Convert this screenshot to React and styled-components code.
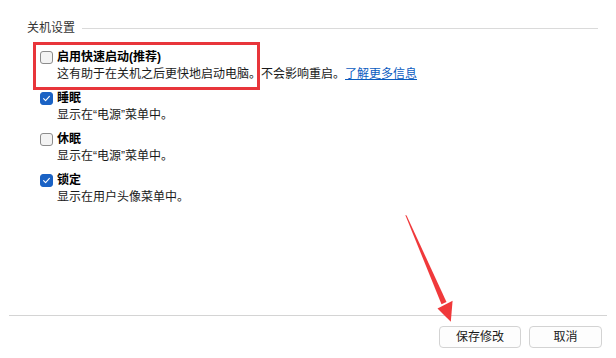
import React from "react";
import styled, { createGlobalStyle } from "styled-components";

const Global = createGlobalStyle`
  html, body { margin: 0; padding: 0; background: #ffffff; }
  body { font-family: "Liberation Sans", "Noto Sans CJK SC", sans-serif; }
  *, *::before, *::after { box-sizing: border-box; }
`;

const Page = styled.div`
  position: relative;
  width: 616px;
  height: 358px;
  display: flex;
  flex-direction: column;
  background: #ffffff;
  overflow: hidden;
`;

const Content = styled.div`
  flex: 1;
  padding: 20px 18px 0 27px;
`;

const Header = styled.div`
  display: flex;
  align-items: center;
  gap: 7px;
  height: 17px;
  font-size: 12px;
  line-height: 17px;
  color: #333333;
  &::after {
    content: "";
    flex: 1;
    height: 1px;
    background: #dadada;
  }
`;

const List = styled.div`
  display: flex;
  flex-direction: column;
  gap: 7px;
  padding: 11.5px 0 0 13px;
`;

const Item = styled.div`
  position: relative;
  display: grid;
  grid-template-columns: 13px auto;
  column-gap: 4px;
  align-items: center;
  font-size: 12px;
  line-height: 17px;
  color: #1a1a1a;
  ${(p) =>
    p.$highlight &&
    `
    &::after {
      content: "";
      position: absolute;
      left: -7px;
      top: -6.5px;
      width: 227px;
      height: 48px;
      border: 3px solid #e8353b;
      pointer-events: none;
    }
  `}
`;

const Box = styled.span`
  width: 13px;
  height: 13px;
  border-radius: 3px;
  display: flex;
  align-items: center;
  justify-content: center;
  background: ${(p) => (p.$checked ? "#1a62c4" : "#f3f3f3")};
  border: 1px solid ${(p) => (p.$checked ? "#1a62c4" : "#8c8c8c")};
`;

const Title = styled.span`
  font-weight: 700;
  color: #000000;
`;

const Desc = styled.span`
  grid-column: 2;
  color: #1a1a1a;
  white-space: nowrap;
`;

const Link = styled.a`
  color: #0b5cbf;
  text-decoration: underline;
  cursor: pointer;
`;

const Footer = styled.div`
  margin: 0 9px;
  border-top: 1px solid #d4d4d4;
  padding: 10px 5px 10px 0;
  display: flex;
  justify-content: flex-end;
  gap: 8px;
`;

const Button = styled.button`
  height: 22px;
  width: ${(p) => p.$w}px;
  border: 1px solid #d3d3d3;
  border-radius: 4px;
  background: #fdfdfd;
  font-family: "Liberation Sans", "Noto Sans CJK SC", sans-serif;
  font-size: 12px;
  line-height: 20px;
  color: #1a1a1a;
  padding: 0;
`;

const Arrow = styled.svg`
  position: absolute;
  left: 0;
  top: 0;
  pointer-events: none;
`;

function Check({ checked }) {
  return (
    <Box $checked={checked}>
      {checked && (
        <svg width="9" height="9" viewBox="0 0 9 9">
          <path d="M1.6 4.7 L3.6 6.6 L7.4 2.4" fill="none" stroke="#ffffff" strokeWidth="1.1" strokeLinecap="round" strokeLinejoin="round" />
        </svg>
      )}
    </Box>
  );
}

const items = [
  {
    title: "启用快速启动(推荐)",
    checked: false,
    highlight: true,
    desc: (
      <>
        这有助于在关机之后更快地启动电脑。不会影响重启。<Link>了解更多信息</Link>
      </>
    ),
  },
  { title: "睡眠", checked: true, desc: "显示在“电源”菜单中。" },
  { title: "休眠", checked: false, desc: "显示在“电源”菜单中。" },
  { title: "锁定", checked: true, desc: "显示在用户头像菜单中。" },
];

export default function App() {
  return (
    <>
      <Global />
      <Page>
        <Content>
          <Header>关机设置</Header>
          <List>
            {items.map((it) => (
              <Item key={it.title} $highlight={it.highlight}>
                <Check checked={it.checked} />
                <Title>{it.title}</Title>
                <Desc>{it.desc}</Desc>
              </Item>
            ))}
          </List>
        </Content>
        <Footer>
          <Button $w={82}>保存修改</Button>
          <Button $w={73}>取消</Button>
        </Footer>
        <Arrow width="616" height="358" viewBox="0 0 616 358">
          <polygon points="405.3,215 406.6,215.4 446.5,302 441.5,304.3" fill="#f0393b" />
          <polygon points="437.5,308.5 452.6,300.8 450.8,321.8" fill="#f0393b" />
        </Arrow>
      </Page>
    </>
  );
}
